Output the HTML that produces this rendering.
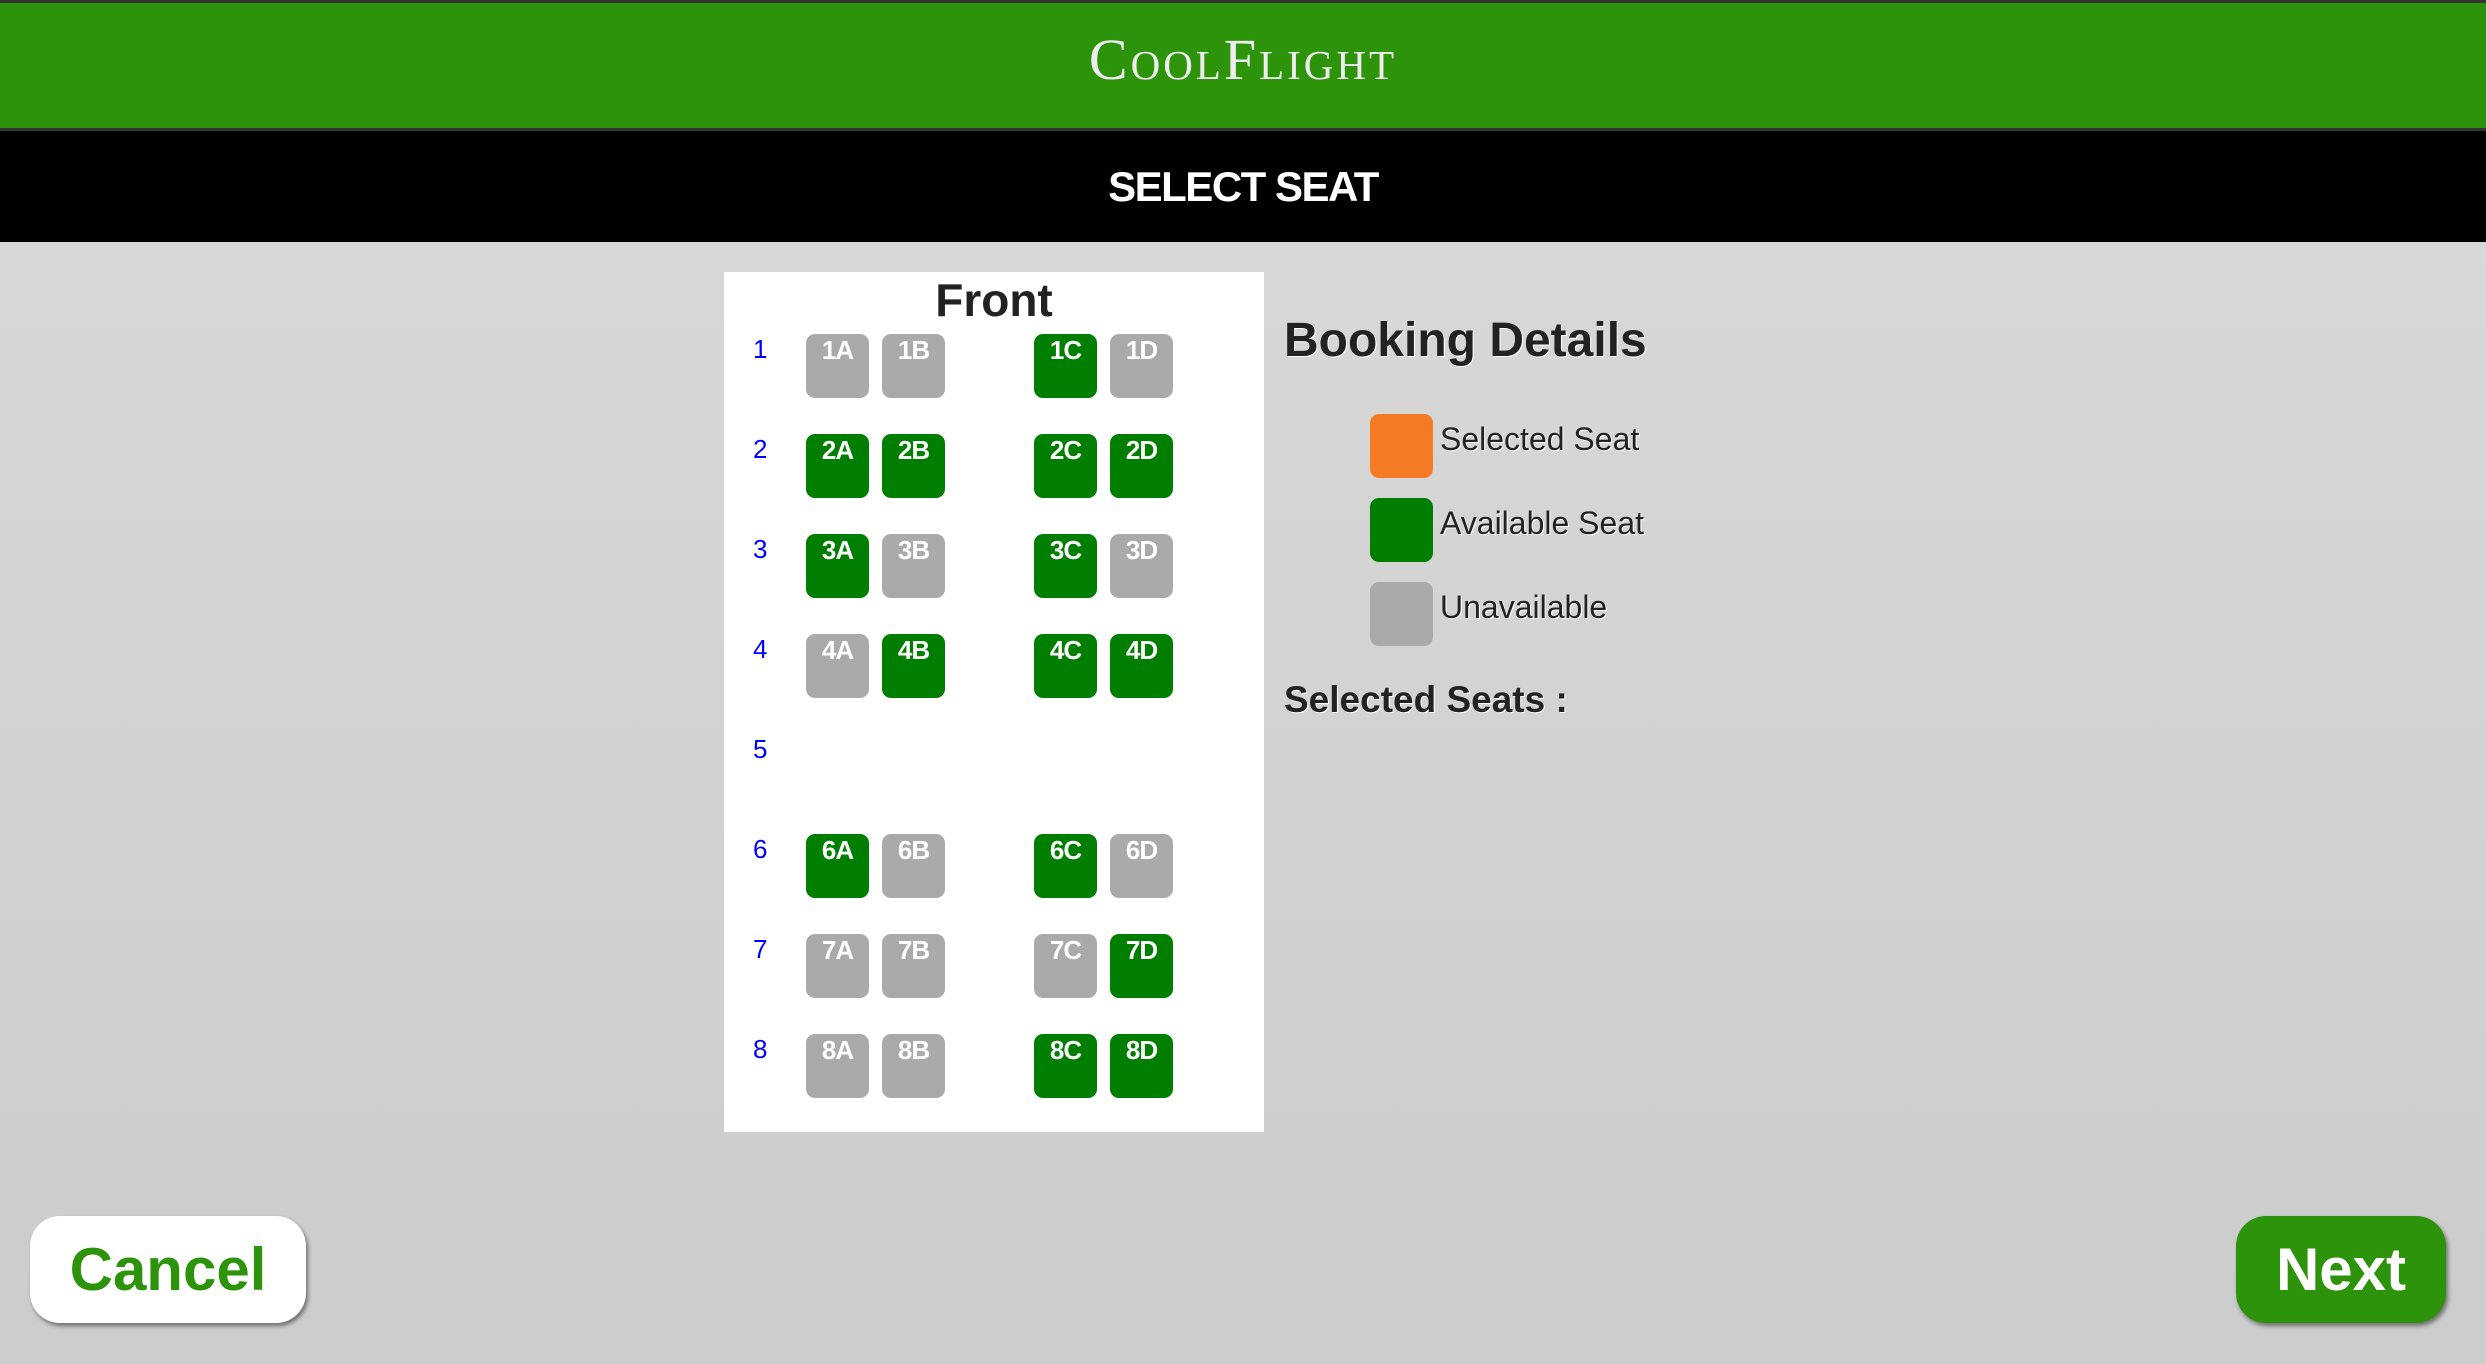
<!DOCTYPE html>
<html><head><meta charset="utf-8">
<style>
*{margin:0;padding:0;box-sizing:border-box}
body{width:2486px;height:1364px;overflow:hidden;position:relative;font-family:"Liberation Sans",sans-serif;background:linear-gradient(#dadada,#cccccc)}
.hdr{position:absolute;left:0;top:0;width:2486px;height:131px;background:#2d930a;border-top:3px solid #333;border-bottom:3px solid #333}
.logo{position:absolute;left:0;width:100%;top:24px;text-align:center;font-family:"Liberation Serif",serif;color:#eee;font-size:58px;font-variant:small-caps;letter-spacing:3px;line-height:66px}
.bar{position:absolute;left:0;top:131px;width:2486px;height:111px;background:#000;color:#fff;text-align:center;font-weight:bold;font-size:42px;line-height:111px;letter-spacing:-1.5px}
.panel{position:absolute;left:724px;top:272px;width:540px;height:860px;background:#fff}
.front{position:absolute;left:0;width:100%;top:0;text-align:center;font-weight:bold;font-size:46px;color:#222;line-height:56px}
.rn{position:absolute;left:29px;color:#00f;font-size:26px;line-height:30px}
.s{position:absolute;width:63px;height:64px;border-radius:9px;color:#fff;font-weight:bold;font-size:26px;text-align:center;line-height:32px;letter-spacing:-1px;padding-top:0}
.g{background:#007e00}.u{background:#aaa}
.bd{position:absolute;left:1284px;top:313px;font-weight:bold;font-size:48px;color:#222;text-shadow:1px 1px 0 #fff}
.lg{position:absolute;left:1370px;width:63px;height:64px;border-radius:9px}
.lt{position:absolute;left:1440px;font-size:32px;color:#222;text-shadow:1px 1px 0 #fff;line-height:40px}
.ss{position:absolute;left:1284px;top:679px;font-weight:bold;font-size:37px;color:#222;text-shadow:1px 1px 0 #fff}
.btn{position:absolute;top:1216px;height:107px;border-radius:30px;font-weight:bold;font-size:60px;text-align:center;line-height:107px;box-shadow:2px 3px 4px rgba(0,0,0,.45)}
</style></head><body>
<div class="hdr"><div class="logo">CoolFlight</div></div>
<div class="bar">SELECT SEAT</div>
<div class="panel">
<div class="front">Front</div>
<div class="rn" style="top:62px">1</div>
<div class="rn" style="top:162px">2</div>
<div class="rn" style="top:262px">3</div>
<div class="rn" style="top:362px">4</div>
<div class="rn" style="top:462px">5</div>
<div class="rn" style="top:562px">6</div>
<div class="rn" style="top:662px">7</div>
<div class="rn" style="top:762px">8</div>

<div class="s u" style="left:82px;top:62px">1A</div><div class="s u" style="left:158px;top:62px">1B</div><div class="s g" style="left:310px;top:62px">1C</div><div class="s u" style="left:386px;top:62px">1D</div>
<div class="s g" style="left:82px;top:162px">2A</div><div class="s g" style="left:158px;top:162px">2B</div><div class="s g" style="left:310px;top:162px">2C</div><div class="s g" style="left:386px;top:162px">2D</div>
<div class="s g" style="left:82px;top:262px">3A</div><div class="s u" style="left:158px;top:262px">3B</div><div class="s g" style="left:310px;top:262px">3C</div><div class="s u" style="left:386px;top:262px">3D</div>
<div class="s u" style="left:82px;top:362px">4A</div><div class="s g" style="left:158px;top:362px">4B</div><div class="s g" style="left:310px;top:362px">4C</div><div class="s g" style="left:386px;top:362px">4D</div>
<div class="s g" style="left:82px;top:562px">6A</div><div class="s u" style="left:158px;top:562px">6B</div><div class="s g" style="left:310px;top:562px">6C</div><div class="s u" style="left:386px;top:562px">6D</div>
<div class="s u" style="left:82px;top:662px">7A</div><div class="s u" style="left:158px;top:662px">7B</div><div class="s u" style="left:310px;top:662px">7C</div><div class="s g" style="left:386px;top:662px">7D</div>
<div class="s u" style="left:82px;top:762px">8A</div><div class="s u" style="left:158px;top:762px">8B</div><div class="s g" style="left:310px;top:762px">8C</div><div class="s g" style="left:386px;top:762px">8D</div>
</div>
<div class="bd">Booking Details</div>
<div class="lg" style="top:414px;background:#f47b23"></div><div class="lt" style="top:419px">Selected Seat</div>
<div class="lg" style="top:498px;background:#007e00"></div><div class="lt" style="top:503px">Available Seat</div>
<div class="lg" style="top:582px;background:#aaa"></div><div class="lt" style="top:587px">Unavailable</div>
<div class="ss">Selected Seats :</div>
<div class="btn" style="left:30px;width:276px;background:#fff;color:#2d930a">Cancel</div>
<div class="btn" style="left:2236px;width:210px;background:#2d930a;color:#fff">Next</div>
</body></html>
